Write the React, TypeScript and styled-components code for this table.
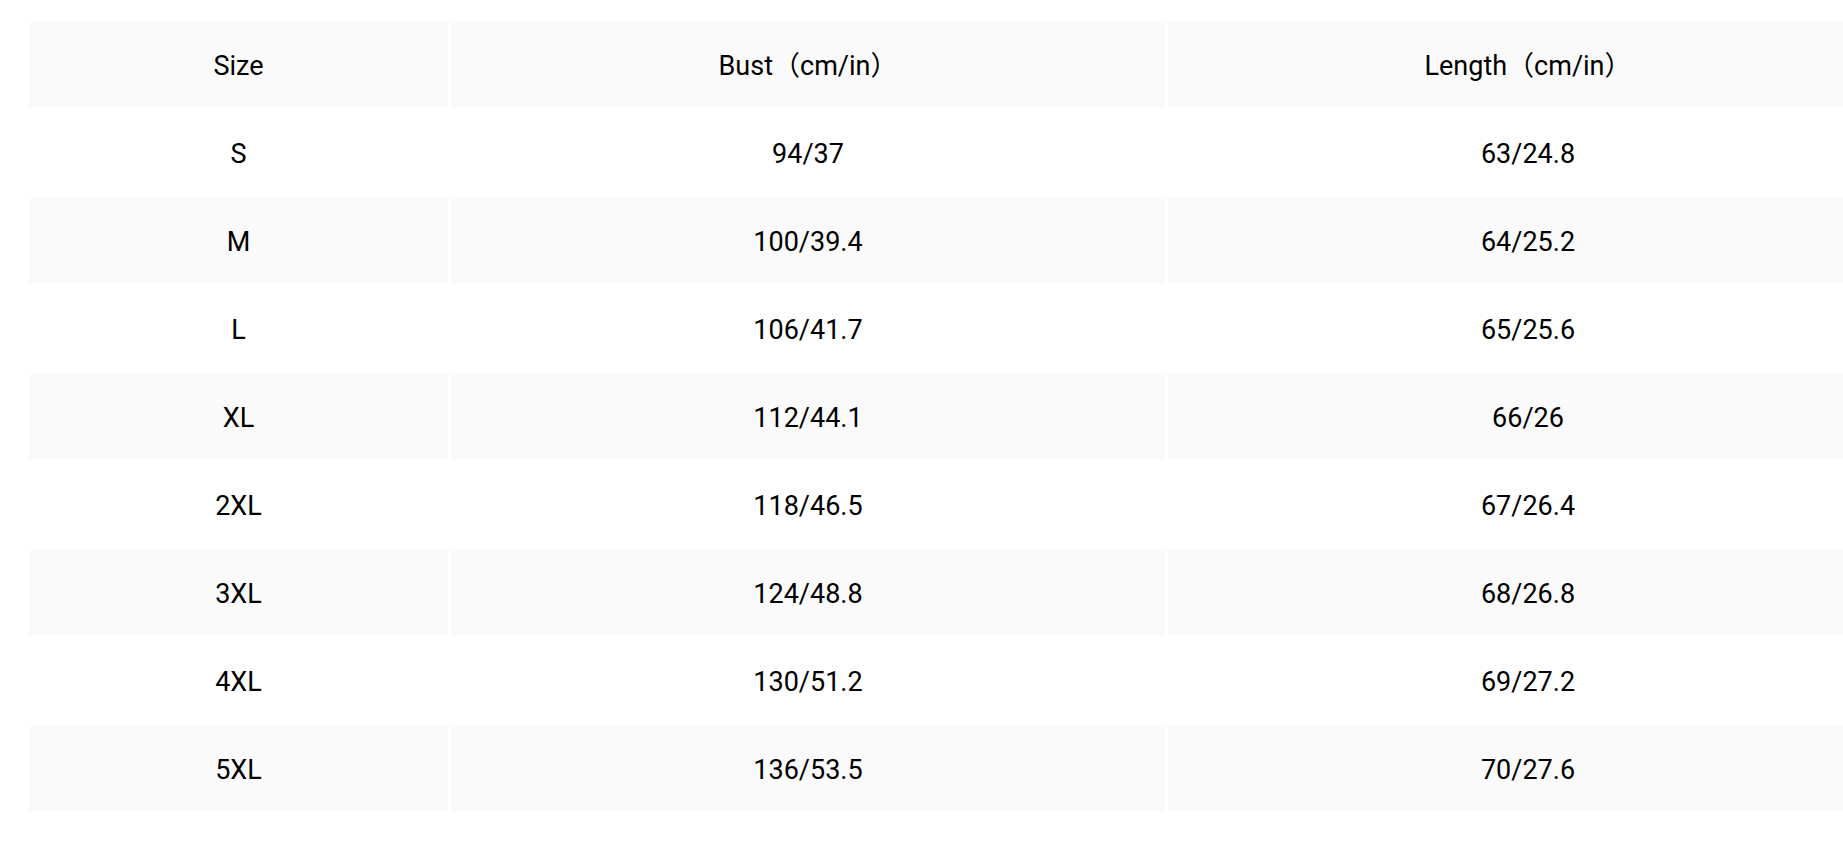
import styled, { createGlobalStyle } from 'styled-components';

const GlobalStyle = createGlobalStyle`
  html, body {
    margin: 0;
    padding: 0;
    background: #fff;
    overflow: hidden;
  }
  body {
    font-family: Roboto, "Liberation Sans", "Noto Sans CJK SC", sans-serif;
  }
`;

const rows = [
  ['S', '94/37', '63/24.8'],
  ['M', '100/39.4', '64/25.2'],
  ['L', '106/41.7', '65/25.6'],
  ['XL', '112/44.1', '66/26'],
  ['2XL', '118/46.5', '67/26.4'],
  ['3XL', '124/48.8', '68/26.8'],
  ['4XL', '130/51.2', '69/27.2'],
  ['5XL', '136/53.5', '70/27.6'],
];

export default function App() {
  return (
    <Page>
      <GlobalStyle />
      <SizeTable>
        <colgroup>
          <col style={{ width: 419 }} />
          <col style={{ width: 714 }} />
          <col style={{ width: 720 }} />
        </colgroup>
        <thead>
          <tr>
            <Cell as="th" $shade>Size</Cell>
            <Cell as="th" $shade>Bust（cm/in）</Cell>
            <Cell as="th" $shade>Length（cm/in）</Cell>
          </tr>
        </thead>
        <tbody>
          {rows.map((r, i) => (
            <tr key={r[0]}>
              {r.map((v, j) => (
                <Cell key={j} $shade={i % 2 === 1}>{v}</Cell>
              ))}
            </tr>
          ))}
        </tbody>
      </SizeTable>
    </Page>
  );
}

const Page = styled.div`
  padding: 19px 0 0 26px;
  width: 1900px;
`;

const SizeTable = styled.table`
  border-collapse: separate;
  border-spacing: 3px;
  table-layout: fixed;
  width: 1862px;
`;

const Cell = styled.td<{ $shade?: boolean }>`
  height: 85px;
  padding: 3px 0 0;
  box-sizing: border-box;
  text-align: center;
  vertical-align: middle;
  font-size: 27px;
  line-height: 32px;
  font-weight: 400;
  color: #000;
  background: ${(p) => (p.$shade ? '#fafafa' : '#fff')};
`;
